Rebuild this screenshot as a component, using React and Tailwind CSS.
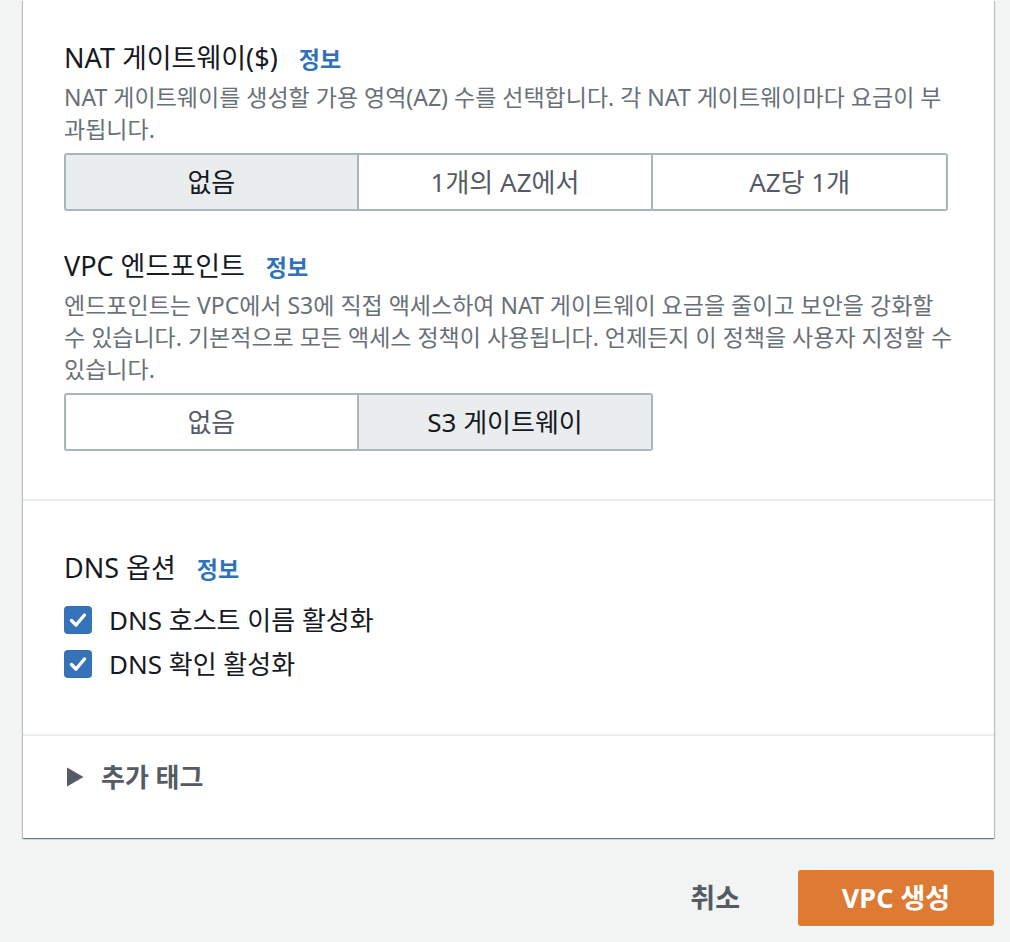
import { useState } from 'react';

const font = { fontFamily: '"Noto Sans", "Noto Sans CJK KR", sans-serif' };

function InfoLink() {
  return <span className="ml-[21px] text-[23px] font-bold text-[#2f72ba]">정보</span>;
}

function Segmented({ options, value, onChange }) {
  return (
    <div className="mt-[8px] grid w-[884px] grid-cols-3">
      {options.map((opt, i) => {
        const active = opt === value;
        return (
          <button
            key={opt}
            onClick={() => onChange(opt)}
            className={
              'h-[58px] border-y-2 border-r-2 border-[#aab7b8] text-[26px] ' +
              (i === 0 ? 'border-l-2 rounded-l-[3px] ' : '') +
              (i === options.length - 1 ? 'rounded-r-[3px] ' : '') +
              (active ? 'bg-[#eaeded] text-[#16191f]' : 'bg-white text-[#545b64]')
            }
          >
            {opt}
          </button>
        );
      })}
    </div>
  );
}

function Check({ label, checked, onToggle }) {
  return (
    <label className="flex h-[36px] cursor-pointer items-center">
      <span
        onClick={onToggle}
        className={
          'flex h-[28px] w-[28px] items-center justify-center rounded-[4px] ' +
          (checked ? 'bg-[#3572b8]' : 'border-2 border-[#aab7b8] bg-white')
        }
      >
        {checked && (
          <svg width="18" height="16" viewBox="0 0 18 16">
            <path d="M2.5 8.5 L7 13 L15.5 3" fill="none" stroke="white" strokeWidth="3.4" strokeLinecap="round" strokeLinejoin="round" />
          </svg>
        )}
      </span>
      <span className="ml-[17px] text-[26px] text-[#16191f]">{label}</span>
    </label>
  );
}

export default function App() {
  const [nat, setNat] = useState('없음');
  const [endpoint, setEndpoint] = useState('S3 게이트웨이');
  const [hostnames, setHostnames] = useState(true);
  const [resolution, setResolution] = useState(true);

  return (
    <div className="min-h-[942px] bg-[#f2f3f3] pl-[23px] pr-[16px]" style={font}>
      <div className="bg-white shadow-[0_1px_1px_0_rgba(0,28,36,0.35),1px_1px_1px_0_rgba(0,28,36,0.2),-1px_1px_1px_0_rgba(0,28,36,0.2)]">
        {/* NAT / VPC endpoint */}
        <div className="px-[41px] pt-[43px] pb-[48px]">
          <div className="flex items-baseline leading-[30px]">
            <span className="text-[27px] text-[#16191f]">NAT 게이트웨이($)</span>
            <InfoLink />
          </div>
          <p className="mt-[7px] w-[891px] text-[23px] leading-[32px] text-[#687078]">
            NAT 게이트웨이를 생성할 가용 영역(AZ) 수를 선택합니다. 각 NAT 게이트웨이마다 요금이 부과됩니다.
          </p>
          <Segmented options={['없음', '1개의 AZ에서', 'AZ당 1개']} value={nat} onChange={setNat} />

          <div className="mt-[40px] flex items-baseline leading-[30px]">
            <span className="text-[27px] text-[#16191f]">VPC 엔드포인트</span>
            <InfoLink />
          </div>
          <p className="mt-[7px] w-[891px] text-[23px] leading-[32px] text-[#687078]">
            엔드포인트는 VPC에서 S3에 직접 액세스하여 NAT 게이트웨이 요금을 줄이고 보안을 강화할 수 있습니다. 기본적으로 모든 액세스 정책이 사용됩니다. 언제든지 이 정책을 사용자 지정할 수 있습니다.
          </p>
          <Segmented options={['없음', 'S3 게이트웨이']} value={endpoint} onChange={setEndpoint} />
        </div>

        {/* DNS options */}
        <div className="border-t-2 border-[#eaeded] px-[41px] pt-[52px] pb-[52px]">
          <div className="flex items-baseline leading-[30px]">
            <span className="text-[27px] text-[#16191f]">DNS 옵션</span>
            <InfoLink />
          </div>
          <div className="mt-[18px] flex flex-col gap-[8px]">
            <Check label="DNS 호스트 이름 활성화" checked={hostnames} onToggle={() => setHostnames(!hostnames)} />
            <Check label="DNS 확인 활성화" checked={resolution} onToggle={() => setResolution(!resolution)} />
          </div>
        </div>

        {/* Additional tags */}
        <div className="border-t-2 border-[#eaeded] px-[41px] pt-[26px] pb-[46px]">
          <div className="flex h-[30px] items-center">
            <svg width="17" height="20" viewBox="0 0 17 20" className="ml-[3px] flex-none">
              <path d="M0 0.5 L16.5 10 L0 19.5 Z" fill="#545b64" />
            </svg>
            <span className="ml-[17px] text-[26px] font-bold text-[#545b64]">추가 태그</span>
          </div>
        </div>
      </div>

      {/* Footer actions */}
      <div className="mt-[32px] flex items-center justify-end">
        <button className="px-[20px] text-[27px] font-bold text-[#545b64]">취소</button>
        <button className="ml-[38px] h-[56px] w-[196px] rounded-[3px] bg-[#dd7a34] text-[27px] font-bold text-white">
          VPC 생성
        </button>
      </div>
    </div>
  );
}
